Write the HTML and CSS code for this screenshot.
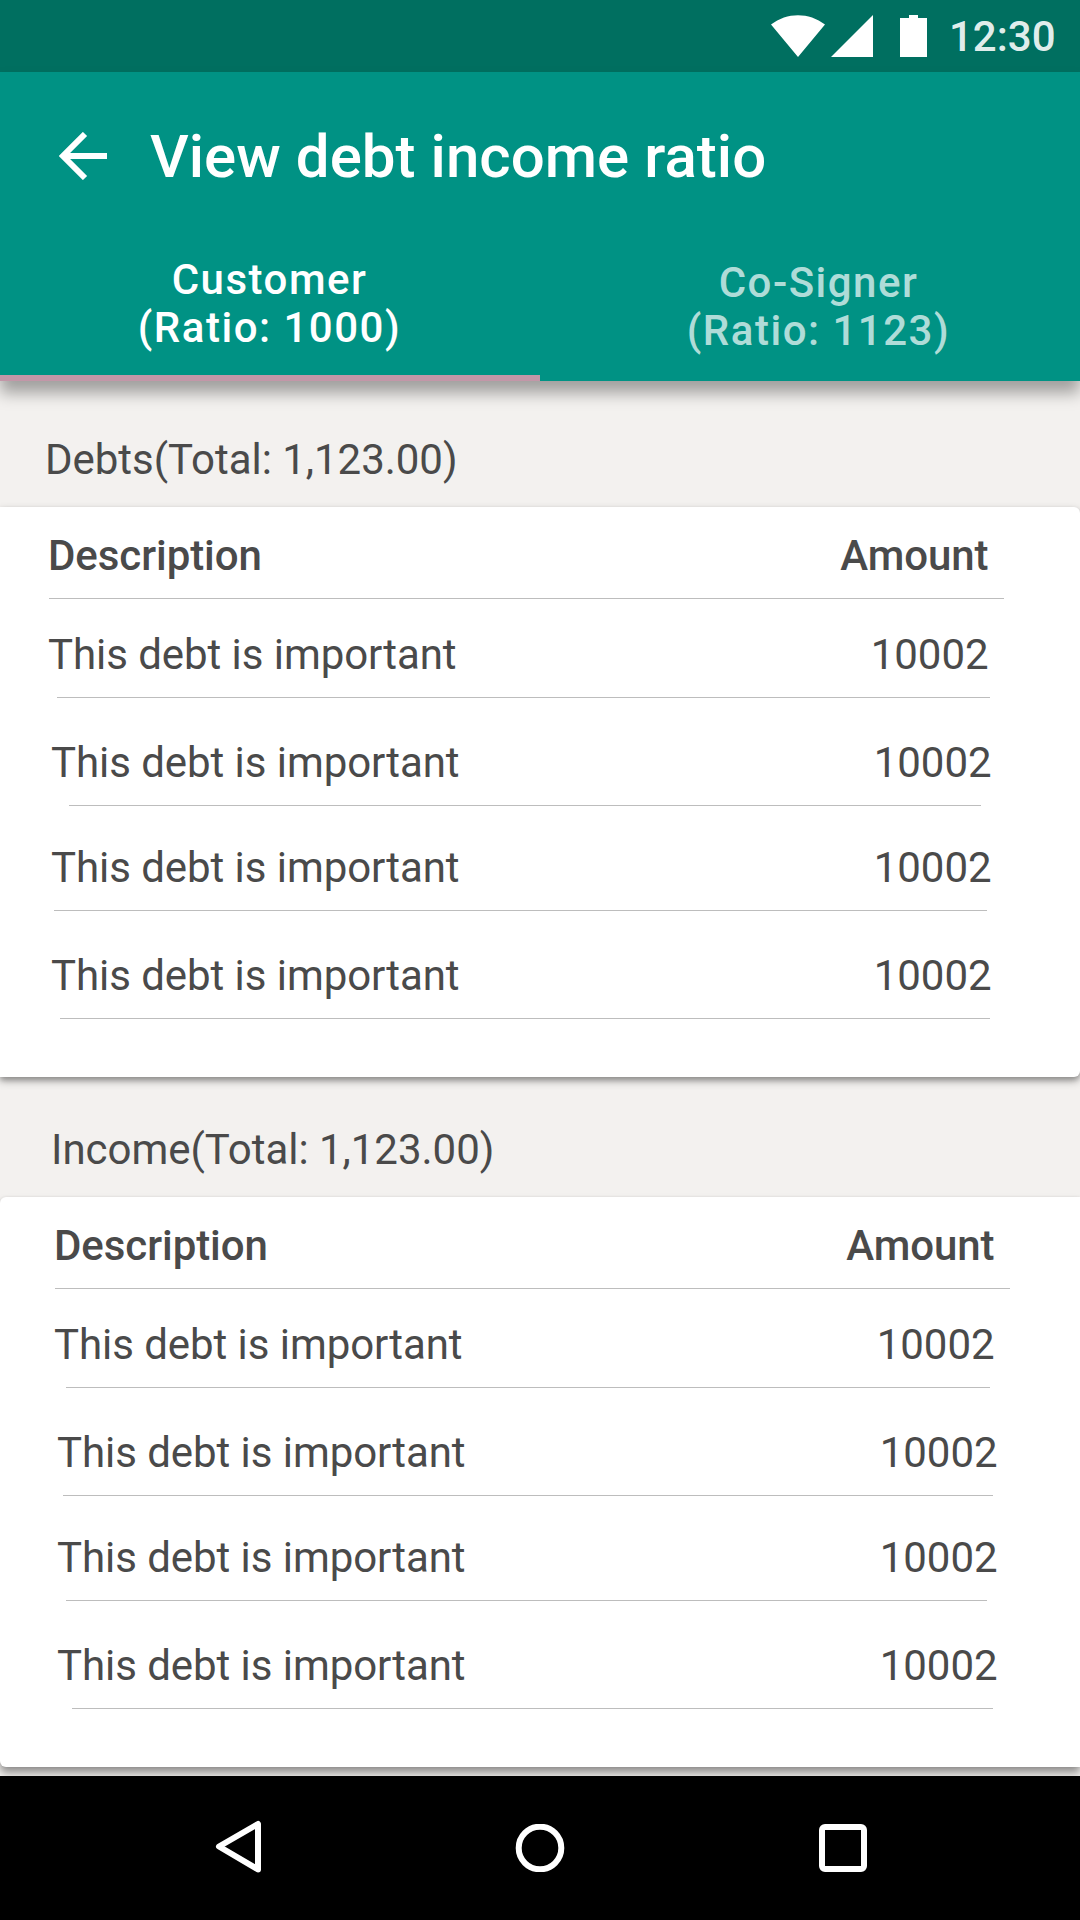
FILE: index.html
```html
<!DOCTYPE html>
<html lang="en">
<head>
<meta charset="utf-8">
<title>View debt income ratio</title>
<link rel="stylesheet" href="styles.css">
</head>
<body>
<div class="status">
  <svg class="status-icons" width="160" height="44" viewBox="0 0 160 44"><path fill="#fff" d="M0 9.500C16-3 38-3 54 9.500L27 42ZM102 0V42H60ZM129 3h9V0h9v3h9v39h-27Z"/></svg>
  <span class="clock">12:30</span>
</div>
<header class="appbar">
  <div class="toolbar">
    <svg class="back" width="48" height="48" viewBox="0 0 48 48"><path fill="none" stroke="#fff" stroke-width="6" d="M26 2 4 24 26 46M4 24H48"/></svg>
    <h1 class="title">View debt income ratio</h1>
  </div>
  <nav class="tabs">
    <div class="tab active">Customer<br>(Ratio: 1000)</div>
    <div class="tab">Co-Signer<br>(Ratio: 1123)</div>
  </nav>
</header>
<main class="content">
  <section class="group debts">
    <h2 class="heading">Debts(Total: 1,123.00)</h2>
    <div class="card">
      <div class="row head"><span>Description</span><span>Amount</span></div>
      <hr class="rule">
      <div class="row r1"><span>This debt is important</span><span>10002</span></div>
      <hr class="rule rule1">
      <div class="row r2"><span>This debt is important</span><span>10002</span></div>
      <hr class="rule rule2">
      <div class="row r3"><span>This debt is important</span><span>10002</span></div>
      <hr class="rule rule3">
      <div class="row r4"><span>This debt is important</span><span>10002</span></div>
      <hr class="rule rule4">
    </div>
  </section>
  <section class="group income">
    <h2 class="heading">Income(Total: 1,123.00)</h2>
    <div class="card">
      <div class="row head"><span>Description</span><span>Amount</span></div>
      <hr class="rule">
      <div class="row r1"><span>This debt is important</span><span>10002</span></div>
      <hr class="rule rule1">
      <div class="row r2"><span>This debt is important</span><span>10002</span></div>
      <hr class="rule rule2">
      <div class="row r3"><span>This debt is important</span><span>10002</span></div>
      <hr class="rule rule3">
      <div class="row r4"><span>This debt is important</span><span>10002</span></div>
      <hr class="rule rule4">
    </div>
  </section>
</main>
<footer class="navbar">
  <svg class="nav-back" width="46" height="54" viewBox="0 0 46 54"><path fill="none" stroke="#fff" stroke-width="6" stroke-linejoin="round" d="M43 4V49.500L4 26.500Z"/></svg>
  <svg class="nav-home" width="50" height="48" viewBox="0 0 50 48"><circle cx="25" cy="24" r="21.300" fill="none" stroke="#fff" stroke-width="6"/></svg>
  <svg class="nav-recent" width="48" height="48" viewBox="0 0 48 48"><rect x="3" y="3" width="42" height="42" rx="3" fill="none" stroke="#fff" stroke-width="6"/></svg>
</footer>
</body>
</html>
```
FILE: styles.css
```css
* { box-sizing: border-box; }
body {
  margin: 0;
  width: 1080px;
  height: 1920px;
  display: flex;
  flex-direction: column;
  overflow: hidden;
  background: #f3f1ef;
  color: #4a4a4a;
  font-family: Roboto, sans-serif;
  font-size: 42px;
  line-height: 48px;
}
h1, h2, hr { margin: 0; }
.status {
  height: 72px;
  flex: none;
  display: flex;
  justify-content: flex-end;
  align-items: flex-start;
  padding-right: 24px;
  background: #006f60;
}
.status-icons { margin: 15px 18px 0 0; }
.clock {
  width: 107px;
  margin-top: 13px;
  font-weight: 500;
  color: rgba(255, 255, 255, .9);
}
.appbar {
  height: 309px;
  flex: none;
  z-index: 1;
  display: flex;
  flex-direction: column;
  background: #009284;
  color: #fff;
  box-shadow: 0 12px 15px rgba(0, 0, 0, .34);
}
.toolbar {
  height: 168px;
  display: flex;
  align-items: center;
  padding-left: 59px;
  gap: 43px;
}
.title {
  padding-top: 2px;
  font-size: 60px;
  line-height: 72px;
  font-weight: 500;
  letter-spacing: .040px;
}
.tabs { flex: 1; display: flex; }
.tab {
  width: 540px;
  padding: 19px 0 0 17px;
  text-align: center;
  font-weight: 500;
  letter-spacing: 1.500px;
  color: rgba(255, 255, 255, .7);
}
.tab.active {
  padding: 16px 1px 0 0;
  color: #fff;
  border-bottom: 6px solid #c397a8;
}
.content { height: 1395px; flex: none; overflow: hidden; }
.group { height: 690px; padding-top: 55px; }
.heading {
  height: 71px;
  padding-left: 45px;
  font-size: 42px;
  font-weight: 400;
  letter-spacing: -.030px;
}
.card {
  height: 570px;
  background: #fff;
  border-radius: 0 6px 6px 0;
  box-shadow: 0 4px 8px rgba(0, 0, 0, .3), 0 3px 5px rgba(0, 0, 0, .2);
  display: flow-root;
}
.row {
  height: 48px;
  display: flex;
  justify-content: space-between;
  padding: 0 92px 0 48px;
  letter-spacing: -.060px;
}
.head { margin: 25px 0 18px; font-weight: 500; }
.r1 { margin: 32px 0 18px; }
.r2 { margin: 41px 0 18px; }
.r3 { margin: 38px 0 18px; }
.r4 { margin: 41px 0 18px; }
.r2, .r3, .r4 { padding: 0 89px 0 51px; }
.rule {
  height: 1px;
  border: 0;
  background: #bdbdbd;
  margin: 0 76px 0 49px;
}
.rule1 { margin: 0 90px 0 57px; }
.rule2 { margin: 0 99px 0 69px; }
.rule3 { margin: 0 93px 0 54px; }
.rule4 { margin: 0 90px 0 60px; }
.income .heading { padding-left: 51px; }
.income .card {
  border-radius: 6px 0 0 6px;
  box-shadow: 0 6px 9px rgba(0, 0, 0, .4), 0 0 3px rgba(0, 0, 0, .08);
}
.income .row { padding: 0 86px 0 54px; }
.income .r2, .income .r3, .income .r4 { padding: 0 83px 0 57px; }
.income .rule { margin: 0 70px 0 55px; }
.income .rule1 { margin: 0 90px 0 66px; }
.income .rule2 { margin: 0 87px 0 63px; }
.income .rule3 { margin: 0 93px 0 66px; }
.income .rule4 { margin: 0 87px 0 72px; }
.row span:last-child { margin-right: -.500px; }
.navbar {
  height: 144px;
  flex: none;
  z-index: 2;
  display: flex;
  align-items: flex-start;
  padding-left: 215px;
  background: #000;
}
.nav-back { margin-top: 44px; }
.nav-home { margin: 48px 0 0 254px; }
.nav-recent { margin: 48px 0 0 254px; }
```
